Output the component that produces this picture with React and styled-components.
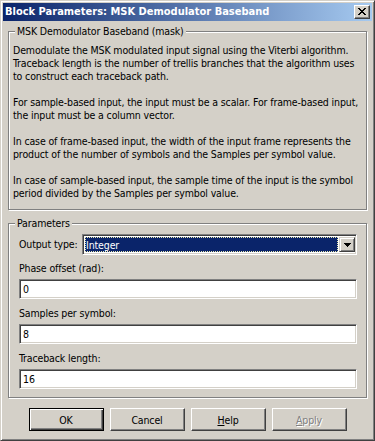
import React from "react";
import styled, { createGlobalStyle, css } from "styled-components";

const Global = createGlobalStyle`
  html, body { margin: 0; padding: 0; background: #d4d0c8; }
  body {
    font-family: "DejaVu Sans Condensed", "DejaVu Sans", sans-serif;
    font-size: 10.5px;
    letter-spacing: -0.13px;
    color: #000;
  }
  * { box-sizing: border-box; }
`;

const raised = css`
  border: 1px solid;
  border-color: #fff #404040 #404040 #fff;
  box-shadow: inset -1px -1px #808080;
`;

const sunken = css`
  border: 1px solid;
  border-color: #808080 #fff #fff #808080;
  box-shadow: inset 1px 1px #404040, inset -1px -1px #d4d0c8;
`;

const Window = styled.div`
  width: 375px;
  height: 441px;
  background: #d4d0c8;
  border: 1px solid;
  border-color: #d4d0c8 #404040 #404040 #d4d0c8;
  box-shadow: inset 1px 1px #fff, inset -1px -1px #808080;
  padding: 2px;
  display: flex;
  flex-direction: column;
`;

const TitleBar = styled.div`
  height: 18px;
  flex: none;
  display: flex;
  align-items: center;
  padding: 0 2px;
  background: linear-gradient(to right, #0a246a, #a6caf0);
`;

const TitleText = styled.span`
  color: #fff;
  font-weight: bold;
  font-size: 11px;
  letter-spacing: 0;
  line-height: 18px;
  white-space: nowrap;
`;

const CaptionButton = styled.div`
  margin-left: auto;
  width: 16px;
  height: 14px;
  background: #d4d0c8;
  border: 1px solid;
  border-color: #fff #404040 #404040 #fff;
  box-shadow: inset -1px -1px #808080;
  display: flex;
  align-items: center;
  justify-content: center;
  padding: 0 1px 1px 0;
`;

const Body = styled.div`
  flex: 1;
  display: flex;
  flex-direction: column;
  padding: 10px 5px 0 5px;
`;

const Group = styled.div`
  position: relative;
  border: 1px solid #808080;
  box-shadow: inset 1px 1px #fff, 1px 1px #fff;
  padding: ${(p) => p.$pad};
  margin-top: ${(p) => p.$top || 0}px;
  display: flex;
  flex-direction: column;
`;

const Legend = styled.span`
  position: absolute;
  top: -7px;
  left: 6px;
  padding: 0 2px;
  background: #d4d0c8;
  line-height: 13px;
  white-space: nowrap;
`;

const Description = styled.div`
  display: flex;
  flex-direction: column;
  gap: 13px;
`;

const Para = styled.p`
  margin: 0;
  line-height: 13px;
  white-space: nowrap;
`;

const Label = styled.div`
  line-height: 13px;
  white-space: nowrap;
  margin-top: ${(p) => p.$top}px;
  margin-bottom: 4px;
`;

const SelectRow = styled.div`
  display: flex;
  align-items: center;
`;

const RowLabel = styled.span`
  width: 63px;
  flex: none;
  line-height: 13px;
  white-space: nowrap;
`;

const SelectBox = styled.div`
  flex: 1;
  height: 21px;
  background: #fff;
  ${sunken};
  padding: 2px 1px 2px 2px;
  display: flex;
  gap: 1px;
`;

const SelectValue = styled.div`
  flex: 1;
  background: #0a246a;
  color: #fff;
  border: 1px dotted #e8e8b0;
  line-height: 15px;
  padding-left: 0;
  white-space: nowrap;
`;

const DropButton = styled.div`
  width: 16px;
  flex: none;
  background: #d4d0c8;
  border: 1px solid;
  border-color: #d4d0c8 #404040 #404040 #d4d0c8;
  box-shadow: inset 1px 1px #fff, inset -1px -1px #808080;
  display: flex;
  align-items: center;
  justify-content: center;
  padding: 1px 0 0 0;
`;

const TextField = styled.div`
  height: 20px;
  background: #fff;
  ${sunken};
  padding: 0 3px;
  line-height: 18px;
  white-space: nowrap;
`;

const ButtonBar = styled.div`
  display: flex;
  justify-content: center;
  gap: 6px;
  margin-top: 10px;
`;

const Button = styled.div`
  width: 75px;
  height: 23px;
  background: #d4d0c8;
  display: flex;
  align-items: center;
  justify-content: center;
  ${raised};
  ${(p) =>
    p.$default &&
    css`
      border: 1px solid #000;
      box-shadow: inset 1px 1px #fff, inset -1px -1px #404040,
        inset -2px -2px #808080;
    `}
  ${(p) =>
    p.$disabled &&
    css`
      color: #808080;
      text-shadow: 1px 1px #fff;
    `}
`;

const Key = styled.span`
  text-decoration: underline;
`;

function CloseGlyph() {
  return (
    <svg width="8" height="7" viewBox="0 0 8 7" shapeRendering="crispEdges">
      <path
        fill="#000"
        d="M0 0h2v1H0z M6 0h2v1H6z M1 1h2v1H1z M5 1h2v1H5z M2 2h4v1H2z M3 3h2v1H3z M2 4h4v1H2z M1 5h2v1H1z M5 5h2v1H5z M0 6h2v1H0z M6 6h2v1H6z"
      />
    </svg>
  );
}

function ArrowGlyph() {
  return (
    <svg width="7" height="4" viewBox="0 0 7 4" shapeRendering="crispEdges">
      <path fill="#000" d="M0 0h7v1H0z M1 1h5v1H1z M2 2h3v1H2z M3 3h1v1H3z" />
    </svg>
  );
}

const paragraphs = [
  [
    "Demodulate the MSK modulated input signal using the Viterbi algorithm.",
    "Traceback length is the number of trellis branches that the algorithm uses",
    "to construct each traceback path.",
  ],
  [
    "For sample-based input, the input must be a scalar. For frame-based input,",
    "the input must be a column vector.",
  ],
  [
    "In case of frame-based input, the width of the input frame represents the",
    "product of the number of symbols and the Samples per symbol value.",
  ],
  [
    "In case of sample-based input, the sample time of the input is the symbol",
    "period divided by the Samples per symbol value.",
  ],
];

const fields = [
  ["Phase offset (rad):", "0"],
  ["Samples per symbol:", "8"],
  ["Traceback length:", "16"],
];

export default function App() {
  return (
    <>
      <Global />
      <Window>
        <TitleBar>
          <TitleText>Block Parameters: MSK Demodulator Baseband</TitleText>
          <CaptionButton>
            <CloseGlyph />
          </CaptionButton>
        </TitleBar>
        <Body>
          <Group $pad="12px 4px 9px 4px">
            <Legend>MSK Demodulator Baseband (mask)</Legend>
            <Description>
              {paragraphs.map((lines, i) => (
                <Para key={i}>
                  {lines.map((l, j) => (
                    <React.Fragment key={j}>
                      {l}
                      {j < lines.length - 1 && <br />}
                    </React.Fragment>
                  ))}
                </Para>
              ))}
            </Description>
          </Group>
          <Group $pad="10px 9px 8px 10px" $top={13}>
            <Legend>Parameters</Legend>
            <SelectRow>
              <RowLabel>Output type:</RowLabel>
              <SelectBox>
                <SelectValue>Integer</SelectValue>
                <DropButton>
                  <ArrowGlyph />
                </DropButton>
              </SelectBox>
            </SelectRow>
            {fields.map(([label, value], i) => (
              <React.Fragment key={label}>
                <Label $top={i === 0 ? 7 : 8}>{label}</Label>
                <TextField>{value}</TextField>
              </React.Fragment>
            ))}
          </Group>
          <ButtonBar>
            <Button $default>OK</Button>
            <Button>Cancel</Button>
            <Button>
              <span>
                <Key>H</Key>elp
              </span>
            </Button>
            <Button $disabled>
              <span>
                <Key>A</Key>pply
              </span>
            </Button>
          </ButtonBar>
        </Body>
      </Window>
    </>
  );
}
